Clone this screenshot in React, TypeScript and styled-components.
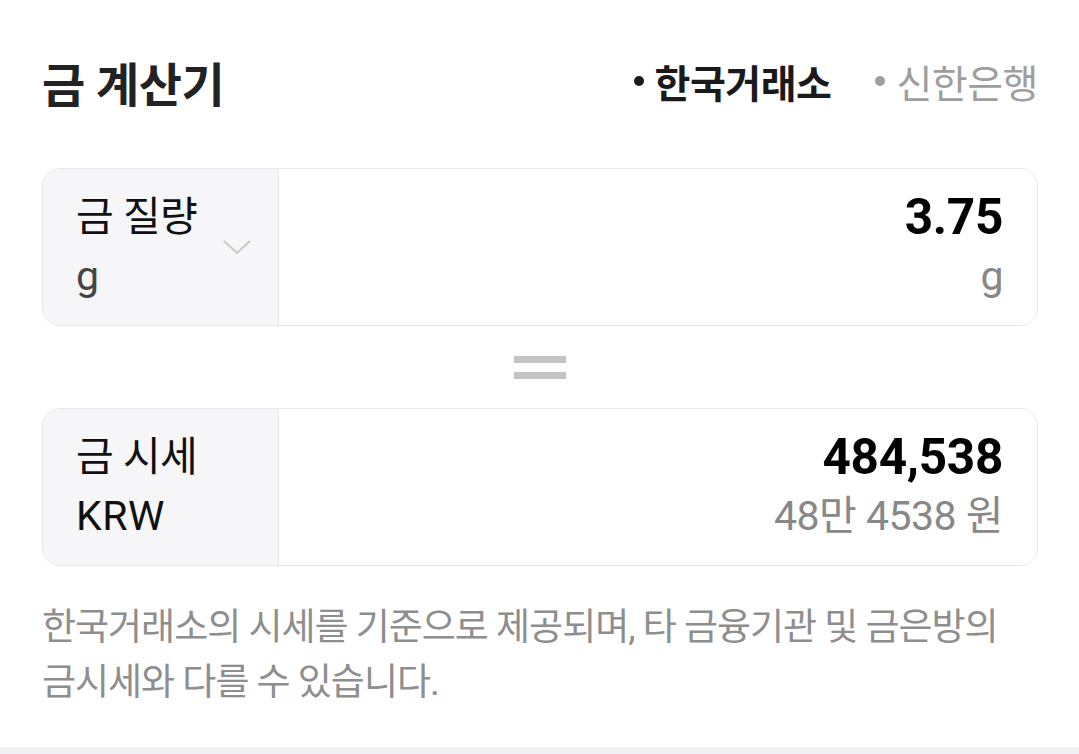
import React from "react";
import styled, { createGlobalStyle } from "styled-components";

const Global = createGlobalStyle`
  html, body { margin: 0; padding: 0; background: #fff; }
  body { font-family: Roboto, "Noto Sans CJK KR", sans-serif; }
`;

const Page = styled.div`
  width: 1079px;
  height: 754px;
  display: flex;
  flex-direction: column;
  overflow: hidden;
`;

const Content = styled.div`
  flex: 1;
  padding: 50px 41px 0 42px;
  display: flex;
  flex-direction: column;
`;

const Header = styled.div`
  height: 62px;
  display: flex;
  align-items: center;
  justify-content: space-between;
`;

const Title = styled.h1`
  margin: 0;
  font-size: 47px;
  font-weight: 700;
  color: #222;
  letter-spacing: -0.5px;
`;

const Tabs = styled.div`
  display: flex;
  align-items: center;
  gap: 44px;
`;

const Tab = styled.div<{ $active?: boolean }>`
  display: flex;
  align-items: center;
  gap: 11px;
  font-size: 39px;
  font-weight: ${(p) => (p.$active ? 700 : 400)};
  color: ${(p) => (p.$active ? "#1a1a1a" : "#9e9e9e")};
  letter-spacing: -0.5px;
  &::before {
    content: "";
    width: 10px;
    height: 10px;
    border-radius: 50%;
    background: currentColor;
  }
`;

const Card = styled.div<{ $mt: number }>`
  margin-top: ${(p) => p.$mt}px;
  display: flex;
  border: 1px solid #e6e6e8;
  border-radius: 18px;
  overflow: hidden;
  height: 158px;
  box-sizing: border-box;
`;

const LabelCol = styled.div`
  width: 236px;
  flex: none;
  background: #f6f6f8;
  border-right: 1px solid #e6e6e8;
  display: flex;
  align-items: center;
  justify-content: space-between;
  padding: 0 26px 0 33px;
  box-sizing: border-box;
`;

const Stack = styled.div<{ $align?: string }>`
  display: flex;
  flex-direction: column;
  align-items: ${(p) => p.$align || "flex-start"};
`;

const LabelMain = styled.div`
  font-size: 41px;
  line-height: 59px;
  color: #111;
  letter-spacing: -0.5px;
  white-space: nowrap;
`;

const LabelSub = styled.div<{ $dark?: boolean }>`
  font-size: 41px;
  line-height: 59px;
  color: ${(p) => (p.$dark ? "#111" : "#444")};
  letter-spacing: ${(p) => (p.$dark ? "0.5px" : "0")};
`;

const ValueCol = styled.div`
  flex: 1;
  display: flex;
  align-items: center;
  justify-content: flex-end;
  padding: 0 34px 0 0;
  background: #fff;
`;

const ValueMain = styled.div`
  font-size: 49.5px;
  line-height: 59px;
  font-weight: 700;
  color: #000;
  letter-spacing: -0.3px;
`;

const ValueSub = styled.div`
  font-size: 41px;
  line-height: 59px;
  color: #888;
  letter-spacing: -0.5px;
`;

const Equals = styled.div`
  height: 82px;
  display: flex;
  flex-direction: column;
  align-items: center;
  justify-content: center;
  gap: 9px;
  &::before, &::after {
    content: "";
    width: 52px;
    height: 7px;
    background: #c4c4c4;
  }
`;

const Note = styled.p`
  margin: 34px 0 0;
  font-size: 37px;
  line-height: 55px;
  color: #8e8e8e;
  letter-spacing: -1px;
`;

const BottomBar = styled.div`
  height: 7px;
  background: #f0f0f2;
  flex: none;
`;

const Chevron = () => (
  <svg width="30" height="16" viewBox="0 0 30 16" fill="none">
    <path d="M2 2 L15 14 L28 2" stroke="#c8c8cc" strokeWidth="2" />
  </svg>
);

export default function App() {
  return (
    <Page>
      <Global />
      <Content>
        <Header>
          <Title>금 계산기</Title>
          <Tabs>
            <Tab $active>한국거래소</Tab>
            <Tab>신한은행</Tab>
          </Tabs>
        </Header>
        <Card $mt={56}>
          <LabelCol>
            <Stack>
              <LabelMain>금 질량</LabelMain>
              <LabelSub>g</LabelSub>
            </Stack>
            <Chevron />
          </LabelCol>
          <ValueCol>
            <Stack $align="flex-end">
              <ValueMain>3.75</ValueMain>
              <ValueSub>g</ValueSub>
            </Stack>
          </ValueCol>
        </Card>
        <Equals />
        <Card $mt={0}>
          <LabelCol>
            <Stack>
              <LabelMain>금 시세</LabelMain>
              <LabelSub $dark>KRW</LabelSub>
            </Stack>
          </LabelCol>
          <ValueCol>
            <Stack $align="flex-end">
              <ValueMain>484,538</ValueMain>
              <ValueSub>48만 4538 원</ValueSub>
            </Stack>
          </ValueCol>
        </Card>
        <Note>
          한국거래소의 시세를 기준으로 제공되며, 타 금융기관 및 금은방의
          <br />
          금시세와 다를 수 있습니다.
        </Note>
      </Content>
      <BottomBar />
    </Page>
  );
}
